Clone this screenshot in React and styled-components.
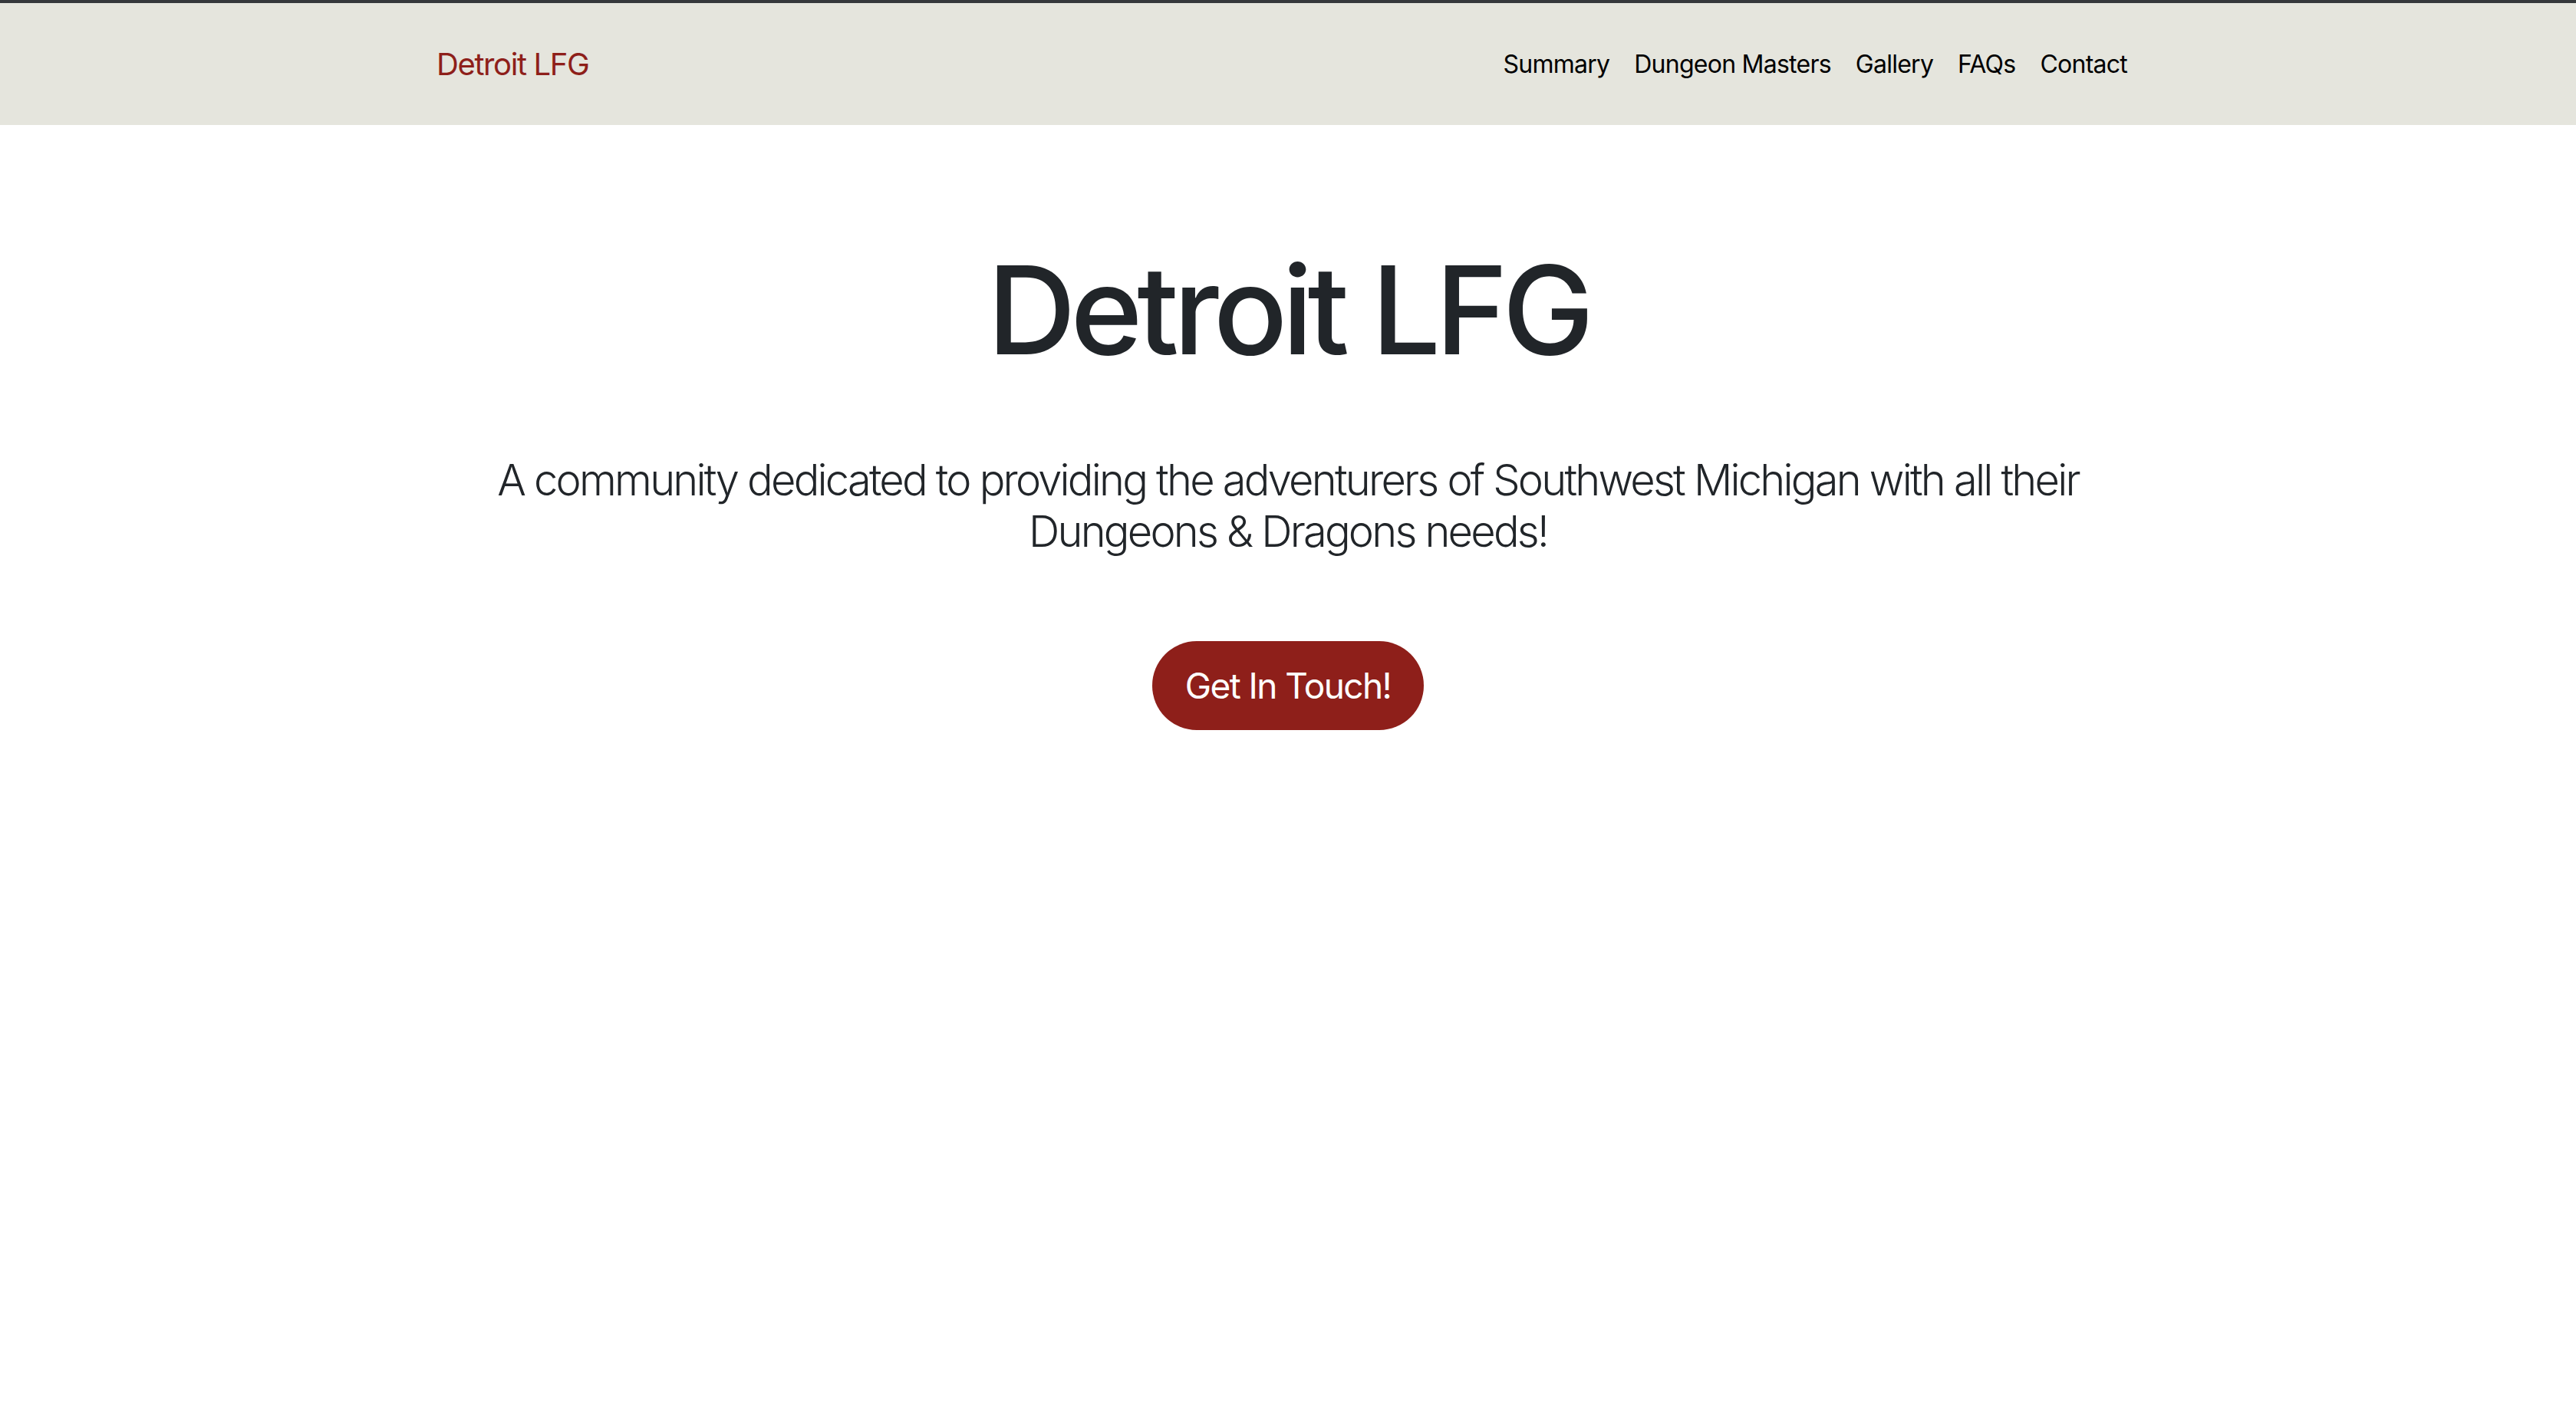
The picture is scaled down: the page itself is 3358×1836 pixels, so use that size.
import styled, { createGlobalStyle } from "styled-components";

const GlobalStyle = createGlobalStyle`
  html, body {
    margin: 0;
    padding: 0;
    background: #ffffff;
  }
  body {
    font-family: Inter, "Noto Sans", "Liberation Sans", sans-serif;
    color: #212529;
  }
  * {
    box-sizing: border-box;
  }
`;

const Page = styled.div`
  min-height: 1836px;
  background: #ffffff;
`;

const NavBar = styled.nav`
  height: 163px;
  border-top: 4px solid #35383b;
  background: #e5e5dd;
  display: flex;
  align-items: center;
`;

const Container = styled.div`
  width: 100%;
  max-width: 2280px;
  margin: 0 auto;
  padding: 0 30px;
`;

const NavInner = styled(Container)`
  display: flex;
  align-items: center;
  justify-content: space-between;
`;

const Brand = styled.a`
  font-size: 40px;
  line-height: 60px;
  color: #8e1f1a;
  text-decoration: none;
  letter-spacing: -1.4px;
`;

const NavList = styled.ul`
  display: flex;
  list-style: none;
  margin: 0;
  padding: 0;
`;

const NavLink = styled.a`
  display: block;
  padding: 0 16px;
  font-size: 32px;
  line-height: 48px;
  color: #000000;
  text-decoration: none;
  letter-spacing: -0.75px;
`;

const Hero = styled(Container)`
  padding-top: 145px;
  display: flex;
  flex-direction: column;
  align-items: center;
  text-align: center;
`;

const Title = styled.h1`
  margin: 0;
  font-size: 160px;
  line-height: 192px;
  font-weight: 500;
  letter-spacing: -7px;
  color: #212529;
`;

const Lead = styled.p`
  margin: 93px 0 0;
  font-size: 56px;
  line-height: 67px;
  font-weight: 300;
  letter-spacing: -2.8px;
  color: #212529;
  max-width: 2220px;
`;

const CtaButton = styled.a`
  margin-top: 109px;
  height: 116px;
  padding: 0 43px;
  display: inline-flex;
  align-items: center;
  justify-content: center;
  border-radius: 58px;
  background: #8e1f1a;
  color: #ffffff;
  font-size: 46px;
  letter-spacing: -1.6px;
  text-decoration: none;
`;

const links = ["Summary", "Dungeon Masters", "Gallery", "FAQs", "Contact"];

export default function App() {
  return (
    <Page>
      <GlobalStyle />
      <NavBar>
        <NavInner>
          <Brand href="#">Detroit LFG</Brand>
          <NavList>
            {links.map((l) => (
              <li key={l}>
                <NavLink href="#">{l}</NavLink>
              </li>
            ))}
          </NavList>
        </NavInner>
      </NavBar>
      <Hero>
        <Title>Detroit LFG</Title>
        <Lead>
          A community dedicated to providing the adventurers of Southwest
          Michigan with all their Dungeons &amp; Dragons needs!
        </Lead>
        <CtaButton href="#">Get In Touch!</CtaButton>
      </Hero>
    </Page>
  );
}
